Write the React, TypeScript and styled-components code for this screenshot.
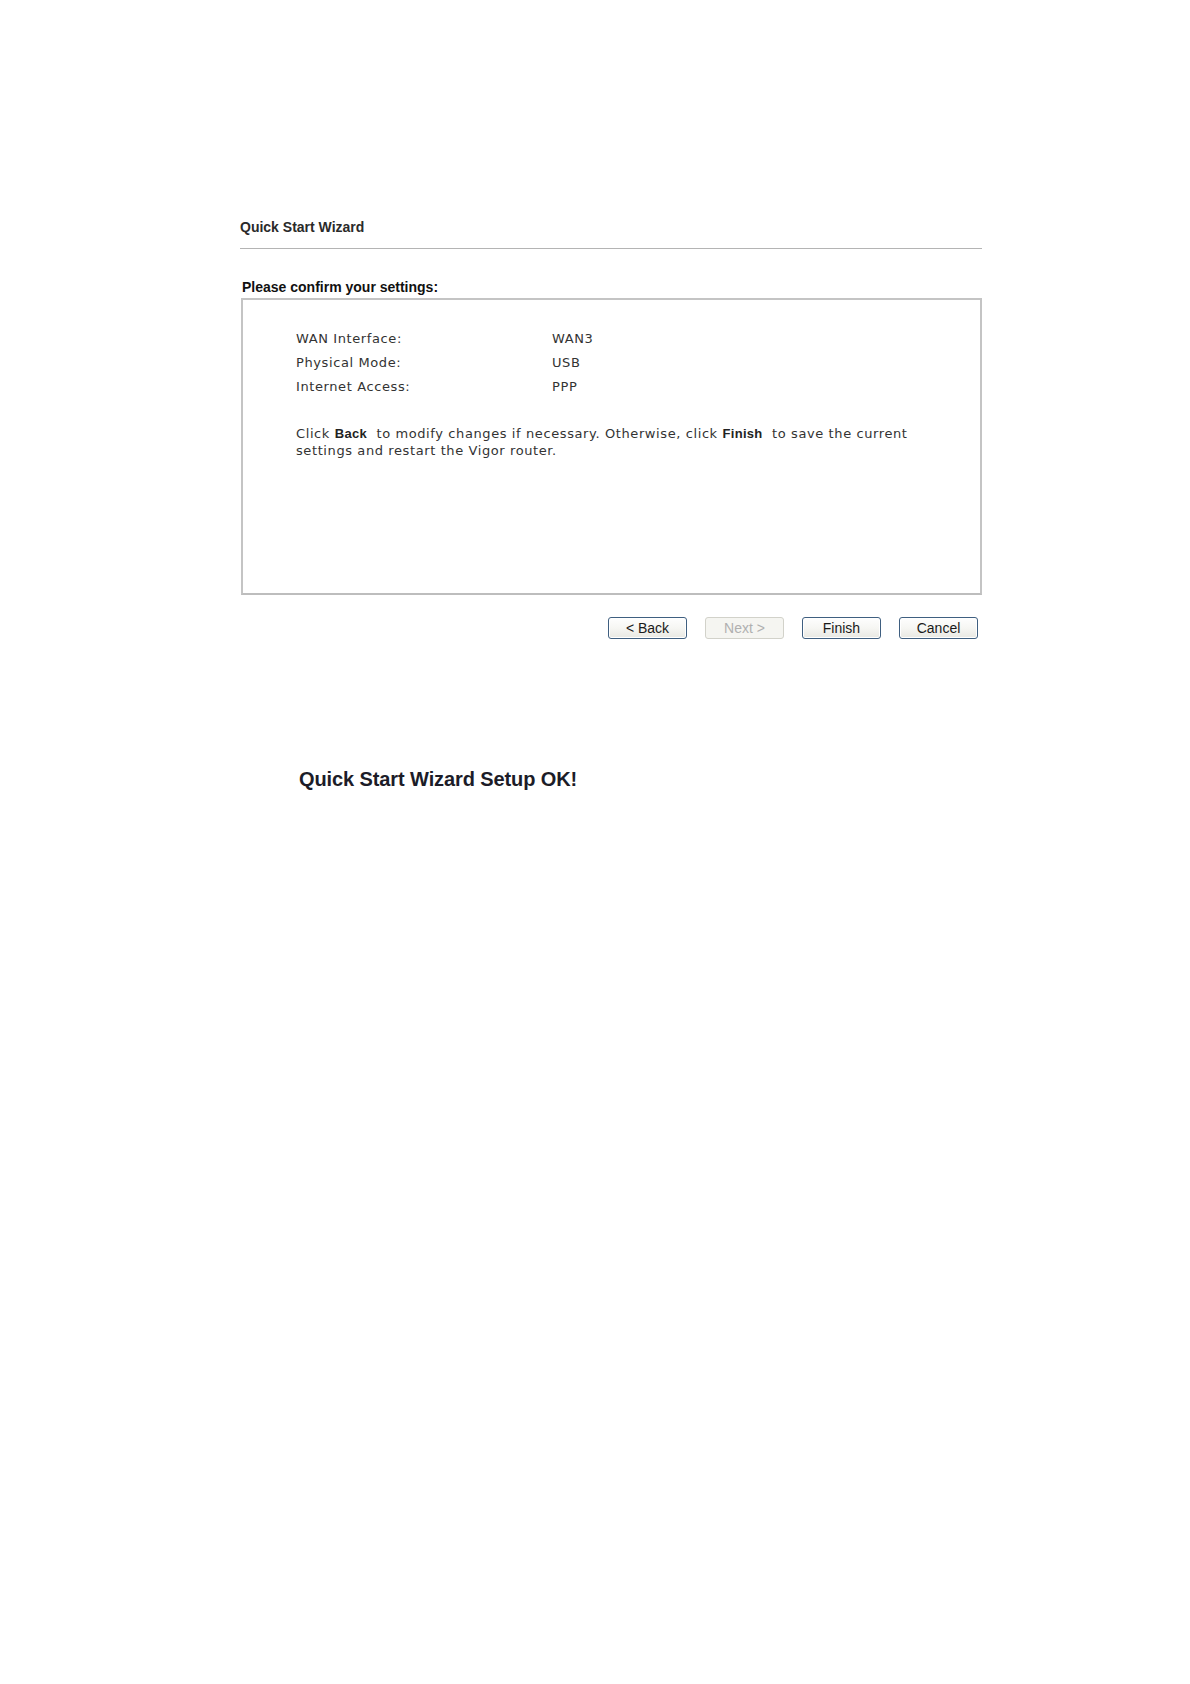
import React from "react";
import styled, { createGlobalStyle } from "styled-components";

const Global = createGlobalStyle`
  html, body { margin: 0; padding: 0; background: #ffffff; }
  body { font-family: "Liberation Sans", Arial, sans-serif; }
  *, *::before, *::after { box-sizing: border-box; }
`;

const Page = styled.div`
  width: 982px;
  padding: 219px 0 0 240px;
  display: flex;
  flex-direction: column;
`;

const Title = styled.div`
  font: bold 14px/16px "Liberation Sans", Arial, sans-serif;
  color: #2a2a2a;
`;

const Divider = styled.div`
  margin-top: 13px;
  height: 1px;
  background: #b4b4b4;
`;

const Caption = styled.div`
  margin-top: 30px;
  padding-left: 2px;
  font: bold 14px/16px "Liberation Sans", Arial, sans-serif;
  color: #111111;
`;

const Box = styled.div`
  margin: 3px 0 0 1px;
  height: 297px;
  border: 2px solid #c4c4c4;
  border-bottom-color: #bdbdbd;
  padding: 27px 0 0 53px;
  font-family: "DejaVu Sans", Verdana, sans-serif;
  font-size: 13px;
  color: #333333;
  letter-spacing: 0.6px;
`;

const Rows = styled.div`
  display: grid;
  grid-template-columns: 256px auto;
  line-height: 24px;
`;

const Note = styled.div`
  margin-top: 26px;
  display: flex;
  flex-direction: column;
  line-height: 17px;
`;

const NoteLine = styled.span`
  white-space: pre;
`;

const Strong = styled.b`
  font-family: "Liberation Sans", Arial, sans-serif;
  font-size: 13px;
  letter-spacing: 0.3px;
  color: #222;
`;

const Buttons = styled.div`
  margin-top: 22px;
  padding-right: 4px;
  display: flex;
  justify-content: flex-end;
  gap: 18px;
`;

const Button = styled.button<{ $disabled?: boolean }>`
  width: 79px;
  height: 22px;
  padding: 0;
  border-radius: 3px;
  border: 1px solid ${(p) => (p.$disabled ? "#d2d2ca" : "#3f5f80")};
  background: ${(p) =>
    p.$disabled
      ? "#f5f5f1"
      : "linear-gradient(#fefefe 0%, #f6f6f3 50%, #e8e8e2 100%)"};
  color: ${(p) => (p.$disabled ? "#b0b0b0" : "#1a1a1a")};
  font: 14px/20px "Liberation Sans", Arial, sans-serif;
  box-shadow: ${(p) => (p.$disabled ? "none" : "inset 0 0 0 1px #ffffff")};
`;

const Success = styled.div`
  margin-top: 128px;
  padding-left: 59px;
  font: bold 20px/24px "Liberation Sans", Arial, sans-serif;
  color: #1c1c28;
  letter-spacing: -0.1px;
`;

const settings: [string, string][] = [
  ["WAN Interface:", "WAN3"],
  ["Physical Mode:", "USB"],
  ["Internet Access:", "PPP"],
];

export default function App() {
  return (
    <>
      <Global />
      <Page>
        <Title>Quick Start Wizard</Title>
        <Divider />
        <Caption>Please confirm your settings:</Caption>
        <Box>
          <Rows>
            {settings.map(([k, v]) => (
              <React.Fragment key={k}>
                <span>{k}</span>
                <span>{v}</span>
              </React.Fragment>
            ))}
          </Rows>
          <Note>
            <NoteLine>
              Click <Strong>Back</Strong>  to modify changes if necessary. Otherwise, click <Strong>Finish</Strong>  to save the current
            </NoteLine>
            <NoteLine>settings and restart the Vigor router.</NoteLine>
          </Note>
        </Box>
        <Buttons>
          <Button>&lt; Back</Button>
          <Button $disabled disabled>Next &gt;</Button>
          <Button>Finish</Button>
          <Button>Cancel</Button>
        </Buttons>
        <Success>Quick Start Wizard Setup OK!</Success>
      </Page>
    </>
  );
}
